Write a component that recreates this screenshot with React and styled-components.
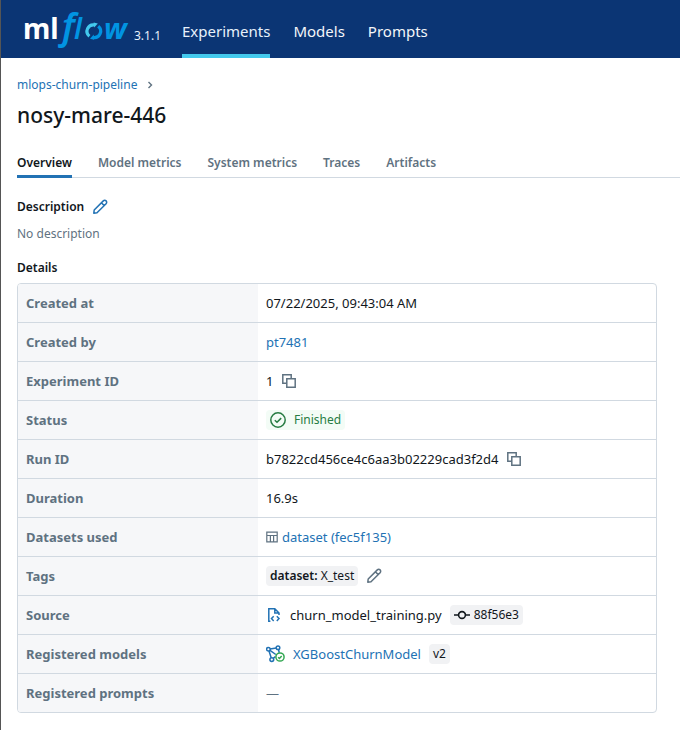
import React from "react";
import styled, { createGlobalStyle, css } from "styled-components";

const GlobalStyle = createGlobalStyle`
  *, *::before, *::after { box-sizing: border-box; }
  body {
    margin: 0;
    background: #fff;
    color: #11171c;
    font: 13px/20px "Noto Sans", "Open Sans", sans-serif;
  }
  #root { min-height: 100vh; display: flex; }
`;

const Page = styled.div`
  flex: 1;
  min-width: 0;
  border-left: 1px solid #555;
`;

const Header = styled.header`
  display: flex;
  height: 58px;
  padding-left: 22px;
  background: #0b3574;
`;

const Brand = styled.a`
  display: flex;
  align-items: flex-end;
  gap: 3px;
  color: #e7f1fb;
  text-decoration: none;
`;

const Version = styled.span`
  padding-bottom: 10px;
  font-size: 12px;
  line-height: 24px;
`;

const MainNav = styled.nav`
  display: flex;
  gap: 23px;
  margin-left: 21px;
`;

const MainLink = styled.a`
  padding-top: 19px;
  border-bottom: 4px solid ${(p) => (p.$active ? "#43c9ed" : "transparent")};
  color: ${(p) => (p.$active ? "#e7f1fb" : "#f4f6f9")};
  font-size: 15px;
  line-height: 24px;
  text-decoration: none;
`;

const Breadcrumb = styled.nav`
  display: flex;
  align-items: center;
  gap: 8px;
  padding: 17px 16px 0;
  line-height: 20px;
  font-size: 12px;
`;

const Link = styled.a`
  color: #2272b4;
  text-decoration: none;
`;

const Title = styled.h1`
  margin: 6px 16px 0;
  font-size: 21px;
  line-height: 28px;
  font-weight: 500;
`;

const TabBar = styled.div`
  display: flex;
  gap: 26px;
  margin: 24px 0 0 16px;
  border-bottom: 1px solid #d1d9e1;
`;

const Tab = styled.button`
  height: 25px;
  margin-bottom: -1px;
  padding: 0 0 2px;
  border: 0;
  border-bottom: 3px solid ${(p) => (p.$active ? "#2272b4" : "transparent")};
  background: none;
  color: ${(p) => (p.$active ? "#11171c" : "#5f7281")};
  font: 600 12px/20px "Noto Sans", "Open Sans", sans-serif;
`;

const Section = styled.section`
  padding: 19px 23px 0 16px;
`;

const Heading = styled.h2`
  display: flex;
  align-items: center;
  gap: 8px;
  margin: 0;
  font-size: 12px;
  line-height: 20px;
  font-weight: 600;
`;

const EmptyText = styled.p`
  margin: 7px 0 14px;
  color: #5f7281;
  font-size: 12px;
  line-height: 20px;
`;

const IconButton = styled.button`
  display: flex;
  padding: 0;
  border: 0;
  background: none;
  color: ${(p) => (p.$primary ? "#2272b4" : "#5f7281")};
`;

const Details = styled.table`
  width: 100%;
  margin-top: 5px;
  border: 1px solid #d1d9e1;
  border-radius: 4px;
  border-spacing: 0;
  overflow: hidden;
  table-layout: fixed;

  tr:not(:last-child) > * { border-bottom: 1px solid #d1d9e1; }
`;

const cell = css`
  height: 39px;
  padding: 0 8px;
  text-align: left;

  tr:last-child > & { height: 38px; }
`;

const Label = styled.th`
  ${cell}
  width: 240px;
  background: #f6f7f9;
  color: #5f7281;
  font-weight: 700;
`;

const Value = styled.td`
  ${cell}
`;

const Inline = styled.div`
  display: flex;
  align-items: center;
  gap: ${(p) => p.$gap || 8}px;
`;

const Tag = styled.span`
  display: inline-flex;
  align-items: center;
  gap: ${(p) => (p.$success ? 8 : 4)}px;
  height: 20px;
  padding: 0 4px;
  border-radius: 4px;
  background: ${(p) => (p.$success ? "#f3fcf6" : "#f1f2f4")};
  color: ${(p) => (p.$success ? "#277c43" : "#11171c")};
  font-size: 12px;
  strong { font-weight: 600; }
`;

const Muted = styled.span`
  color: #5f7281;
`;

const Logo = () => (
  <svg width="108" height="58" viewBox="0 0 108 58" role="img" aria-label="mlflow">
    <g fontFamily="Noto Sans, Open Sans, sans-serif">
      <text x="0" y="39" fontSize="28" fill="#fff" fontWeight="700">ml</text>
      <g fill="#0194e2" fontStyle="italic">
        <text x="39" y="39" fontSize="36" fontWeight="600">f</text>
        <text x="51" y="39" fontSize="28" fontWeight="600">l</text>
        <text x="81" y="39" fontSize="29" fontWeight="700">w</text>
      </g>
    </g>
    <g fill="none" strokeWidth="3.2">
      <path d="M66.4 36.2A6.4 6.4 0 0 1 71.4 24.9" stroke="#43c9ed" />
      <path d="M75.2 26.2A6.4 6.4 0 0 1 70 37.5" stroke="#0194e2" />
    </g>
    <path d="m70.6 22.6 4.2 1-3.6 4z" fill="#43c9ed" />
    <path d="m70.8 34.6-3.8 4.2 4 1z" fill="#0194e2" />
  </svg>
);

const Pencil = () => (
  <svg width="16" height="16" viewBox="0 0 16 16" fill="none" stroke="currentColor" strokeWidth="1.5" strokeLinejoin="round" aria-hidden="true">
    <path d="M1.8 14.2 2.2 11 11.3 1.9a1.9 1.9 0 0 1 2.8 2.8L5 13.8zM9.4 3.8l2.8 2.8" />
  </svg>
);

const Copy = () => (
  <svg width="16" height="16" viewBox="0 0 16 16" fill="none" stroke="currentColor" strokeWidth="1.5" aria-hidden="true">
    <path d="M5.8 10.2H1.8V1.8h8.4v4M5.8 5.8h8.4v8.4H5.8z" />
  </svg>
);

const Check = () => (
  <svg width="16" height="16" viewBox="0 0 16 16" fill="none" stroke="currentColor" strokeWidth="1.5" aria-hidden="true">
    <circle cx="8" cy="8" r="7.2" />
    <path d="m4.8 8.2 2.2 2.1 4.2-4.2" />
  </svg>
);

const Chevron = () => (
  <svg width="10" height="10" viewBox="0 0 10 10" fill="none" stroke="#5f7281" strokeWidth="1.4" aria-hidden="true">
    <path d="m3.5 2 3 3-3 3" />
  </svg>
);

const TableIcon = () => (
  <svg width="12" height="12" viewBox="0 0 12 12" fill="none" stroke="#5f7281" aria-hidden="true">
    <path d="M.8 1.2h10.4v9.6H.8zM.8 4.5h10.4M4.4 4.5v6.3M7.6 4.5v6.3" strokeWidth="1.2" />
  </svg>
);

const FileCode = () => (
  <svg width="16" height="16" viewBox="0 0 16 16" fill="none" stroke="#2272b4" strokeWidth="1.5" aria-hidden="true">
    <path d="M4.4 14.3H2.8V1.8h6L13 6v2M8.8 1.8V6H13M7.7 9.3 5.5 11.6l2.2 2.3M10.8 9.3l2.2 2.3-2.2 2.3" />
  </svg>
);

const Commit = () => (
  <svg width="16" height="16" viewBox="0 0 16 16" fill="none" stroke="#11171c" strokeWidth="1.6" aria-hidden="true">
    <circle cx="8" cy="8" r="3.4" />
    <path d="M0 8h4.6M11.4 8H16" />
  </svg>
);

const RegisteredModel = () => (
  <svg width="19" height="18" viewBox="0 0 19 18" fill="none" stroke="#2272b4" strokeWidth="1.5" aria-hidden="true">
    <path d="M4 4 10.3 3M4 5.3l5.8 4.2M3 6l2.2 6.8M12.5 4.7l.8 3M7.2 13.3l2.2-1.6" />
    <circle cx="2.4" cy="4.2" r="1.8" />
    <circle cx="12" cy="2.8" r="1.8" />
    <circle cx="5.8" cy="14.6" r="1.9" />
    <circle cx="14" cy="12" r="4.1" fill="#fff" stroke="#34a853" />
    <path d="m12.1 12.2 1.3 1.2 2.3-2.5" stroke="#34a853" />
  </svg>
);

const CopyButton = ({ label }) => (
  <IconButton aria-label={label}><Copy /></IconButton>
);

const rows = [
  ["Created at", "07/22/2025, 09:43:04 AM"],
  ["Created by", <Link href="#user">pt7481</Link>],
  ["Experiment ID", <Inline>1 <CopyButton label="Copy experiment ID" /></Inline>],
  ["Status", <Inline><Tag $success><Check />Finished</Tag></Inline>],
  ["Run ID", <Inline>b7822cd456ce4c6aa3b02229cad3f2d4 <CopyButton label="Copy run ID" /></Inline>],
  ["Duration", "16.9s"],
  ["Datasets used", <Inline $gap={4}><TableIcon /><Link href="#dataset">dataset (fec5f135)</Link></Inline>],
  ["Tags", <Inline><Tag><span><strong>dataset:</strong> X_test</span></Tag><IconButton aria-label="Edit tags"><Pencil /></IconButton></Inline>],
  ["Source", <Inline><FileCode />churn_model_training.py <Tag><Commit />88f56e3</Tag></Inline>],
  ["Registered models", <Inline><RegisteredModel /><Link href="#model">XGBoostChurnModel</Link><Tag>v2</Tag></Inline>],
  ["Registered prompts", <Muted>—</Muted>],
];

const tabs = ["Overview", "Model metrics", "System metrics", "Traces", "Artifacts"];

export default function App() {
  return (
    <>
      <GlobalStyle />
      <Page>
        <Header>
          <Brand href="#home"><Logo /><Version>3.1.1</Version></Brand>
          <MainNav>
            <MainLink href="#experiments" $active>Experiments</MainLink>
            <MainLink href="#models">Models</MainLink>
            <MainLink href="#prompts">Prompts</MainLink>
          </MainNav>
        </Header>
        <main>
          <Breadcrumb><Link href="#pipeline">mlops-churn-pipeline</Link><Chevron /></Breadcrumb>
          <Title>nosy-mare-446</Title>
          <TabBar role="tablist">
            {tabs.map((t, i) => (
              <Tab key={t} role="tab" aria-selected={i === 0} $active={i === 0}>{t}</Tab>
            ))}
          </TabBar>
          <Section>
            <Heading>Description <IconButton $primary aria-label="Edit description"><Pencil /></IconButton></Heading>
            <EmptyText>No description</EmptyText>
            <Heading>Details</Heading>
            <Details>
              <tbody>
                {rows.map(([label, value]) => (
                  <tr key={label}><Label scope="row">{label}</Label><Value>{value}</Value></tr>
                ))}
              </tbody>
            </Details>
          </Section>
        </main>
      </Page>
    </>
  );
}
